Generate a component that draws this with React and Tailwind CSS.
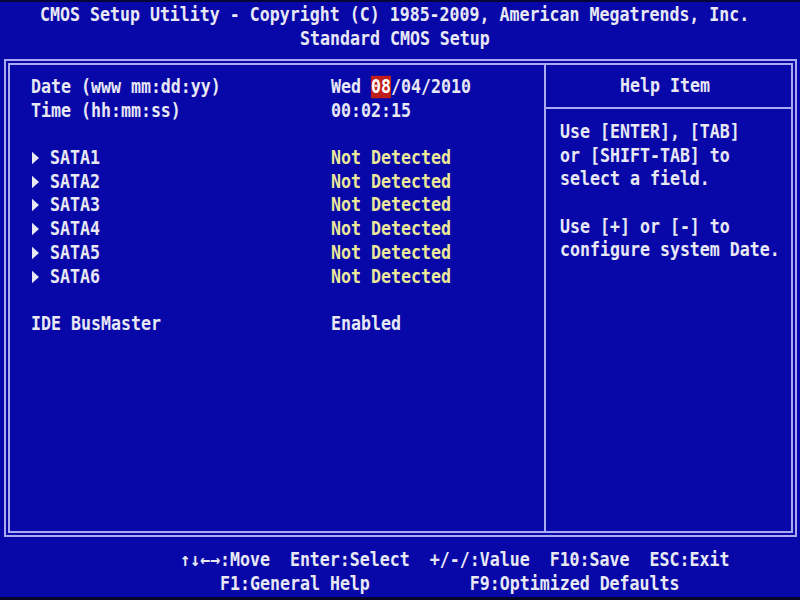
import React from "react";

const FONT = { fontFamily: '"DejaVu Sans Mono", "Liberation Mono", monospace' };

function Arrow() {
  return (
    <span className="inline-block w-[19px] align-middle">
      <svg width="10" height="12" viewBox="0 0 10 12" className="block">
        <polygon points="1,0.5 8,6 1,11.5" fill="#e8e8f4" />
      </svg>
    </span>
  );
}

function Row({ label, value, arrow, yellow }) {
  return (
    <div className="flex h-[23.7px] leading-[23.7px] scale-y-[1.12] whitespace-pre">
      <div className="w-[300px] flex items-center">
        {arrow && <Arrow />}
        <span>{label}</span>
      </div>
      <div className={yellow ? "text-[#ece89a]" : ""}>{value}</div>
    </div>
  );
}

export default function App() {
  const help = [
    "Use [ENTER], [TAB]",
    "or [SHIFT-TAB] to",
    "select a field.",
    "",
    "Use [+] or [-] to",
    "configure system Date.",
  ];
  return (
    <div
      className="w-[800px] h-[600px] bg-[#0808a8] text-[#e8e8f4] font-bold text-[16.6px] overflow-hidden flex flex-col"
      style={FONT}
    >
      <div className="h-[2px] bg-[#05053a]" />
      <div className="h-[57px] pt-[1px] whitespace-pre">
        <div className="h-[23.7px] leading-[23.7px] pl-[40px] scale-y-[1.12]">
          CMOS Setup Utility - Copyright (C) 1985-2009, American Megatrends, Inc.
        </div>
        <div className="h-[23.7px] leading-[23.7px] pl-[300px] scale-y-[1.12]">
          Standard CMOS Setup
        </div>
      </div>

      <div className="ml-[4px] w-[793px] h-[478px] border-[6px] border-double border-[#aaaaf2] flex">
        <div className="w-[534px] pt-[10px] pl-[21px]">
          <div className="flex h-[23.7px] leading-[23.7px] scale-y-[1.12] whitespace-pre">
            <div className="w-[300px]">Date (www mm:dd:yy)</div>
            <div className="flex items-center">
              <span>Wed </span>
              <span className="inline-block h-[20px] leading-[20px] bg-[#c01e1a] text-white">08</span>
              <span>/04/2010</span>
            </div>
          </div>
          <Row label="Time (hh:mm:ss)" value="00:02:15" />
          <div className="h-[23.7px]" />
          {[1, 2, 3, 4, 5, 6].map((n) => (
            <Row key={n} arrow label={`SATA${n}`} value="Not Detected" yellow />
          ))}
          <div className="h-[23.7px]" />
          <Row label="IDE BusMaster" value="Enabled" />
        </div>
        <div className="w-[2px] bg-[#aaaaf2]" />
        <div className="flex-1 flex flex-col">
          <div className="h-[42px] flex items-center pl-[74px] whitespace-pre">
            <span className="inline-block scale-y-[1.12]">Help Item</span>
          </div>
          <div className="h-[2px] bg-[#aaaaf2]" />
          <div className="pt-[11px] pl-[14px]">
            {help.map((t, i) => (
              <div
                key={i}
                className="h-[23.7px] leading-[23.7px] scale-y-[1.12] whitespace-pre"
              >
                {t}
              </div>
            ))}
          </div>
        </div>
      </div>

      <div className="h-[60px] pt-[11px] whitespace-pre">
        <div className="h-[23.7px] leading-[23.7px] pl-[180px] scale-y-[1.12]">
          ↑↓←→:Move  Enter:Select  +/-/:Value  F10:Save  ESC:Exit
        </div>
        <div className="h-[23.7px] leading-[23.7px] pl-[220px] scale-y-[1.12]">
          F1:General Help          F9:Optimized Defaults
        </div>
      </div>
      <div className="flex-1 bg-[#05052a]" />
    </div>
  );
}
